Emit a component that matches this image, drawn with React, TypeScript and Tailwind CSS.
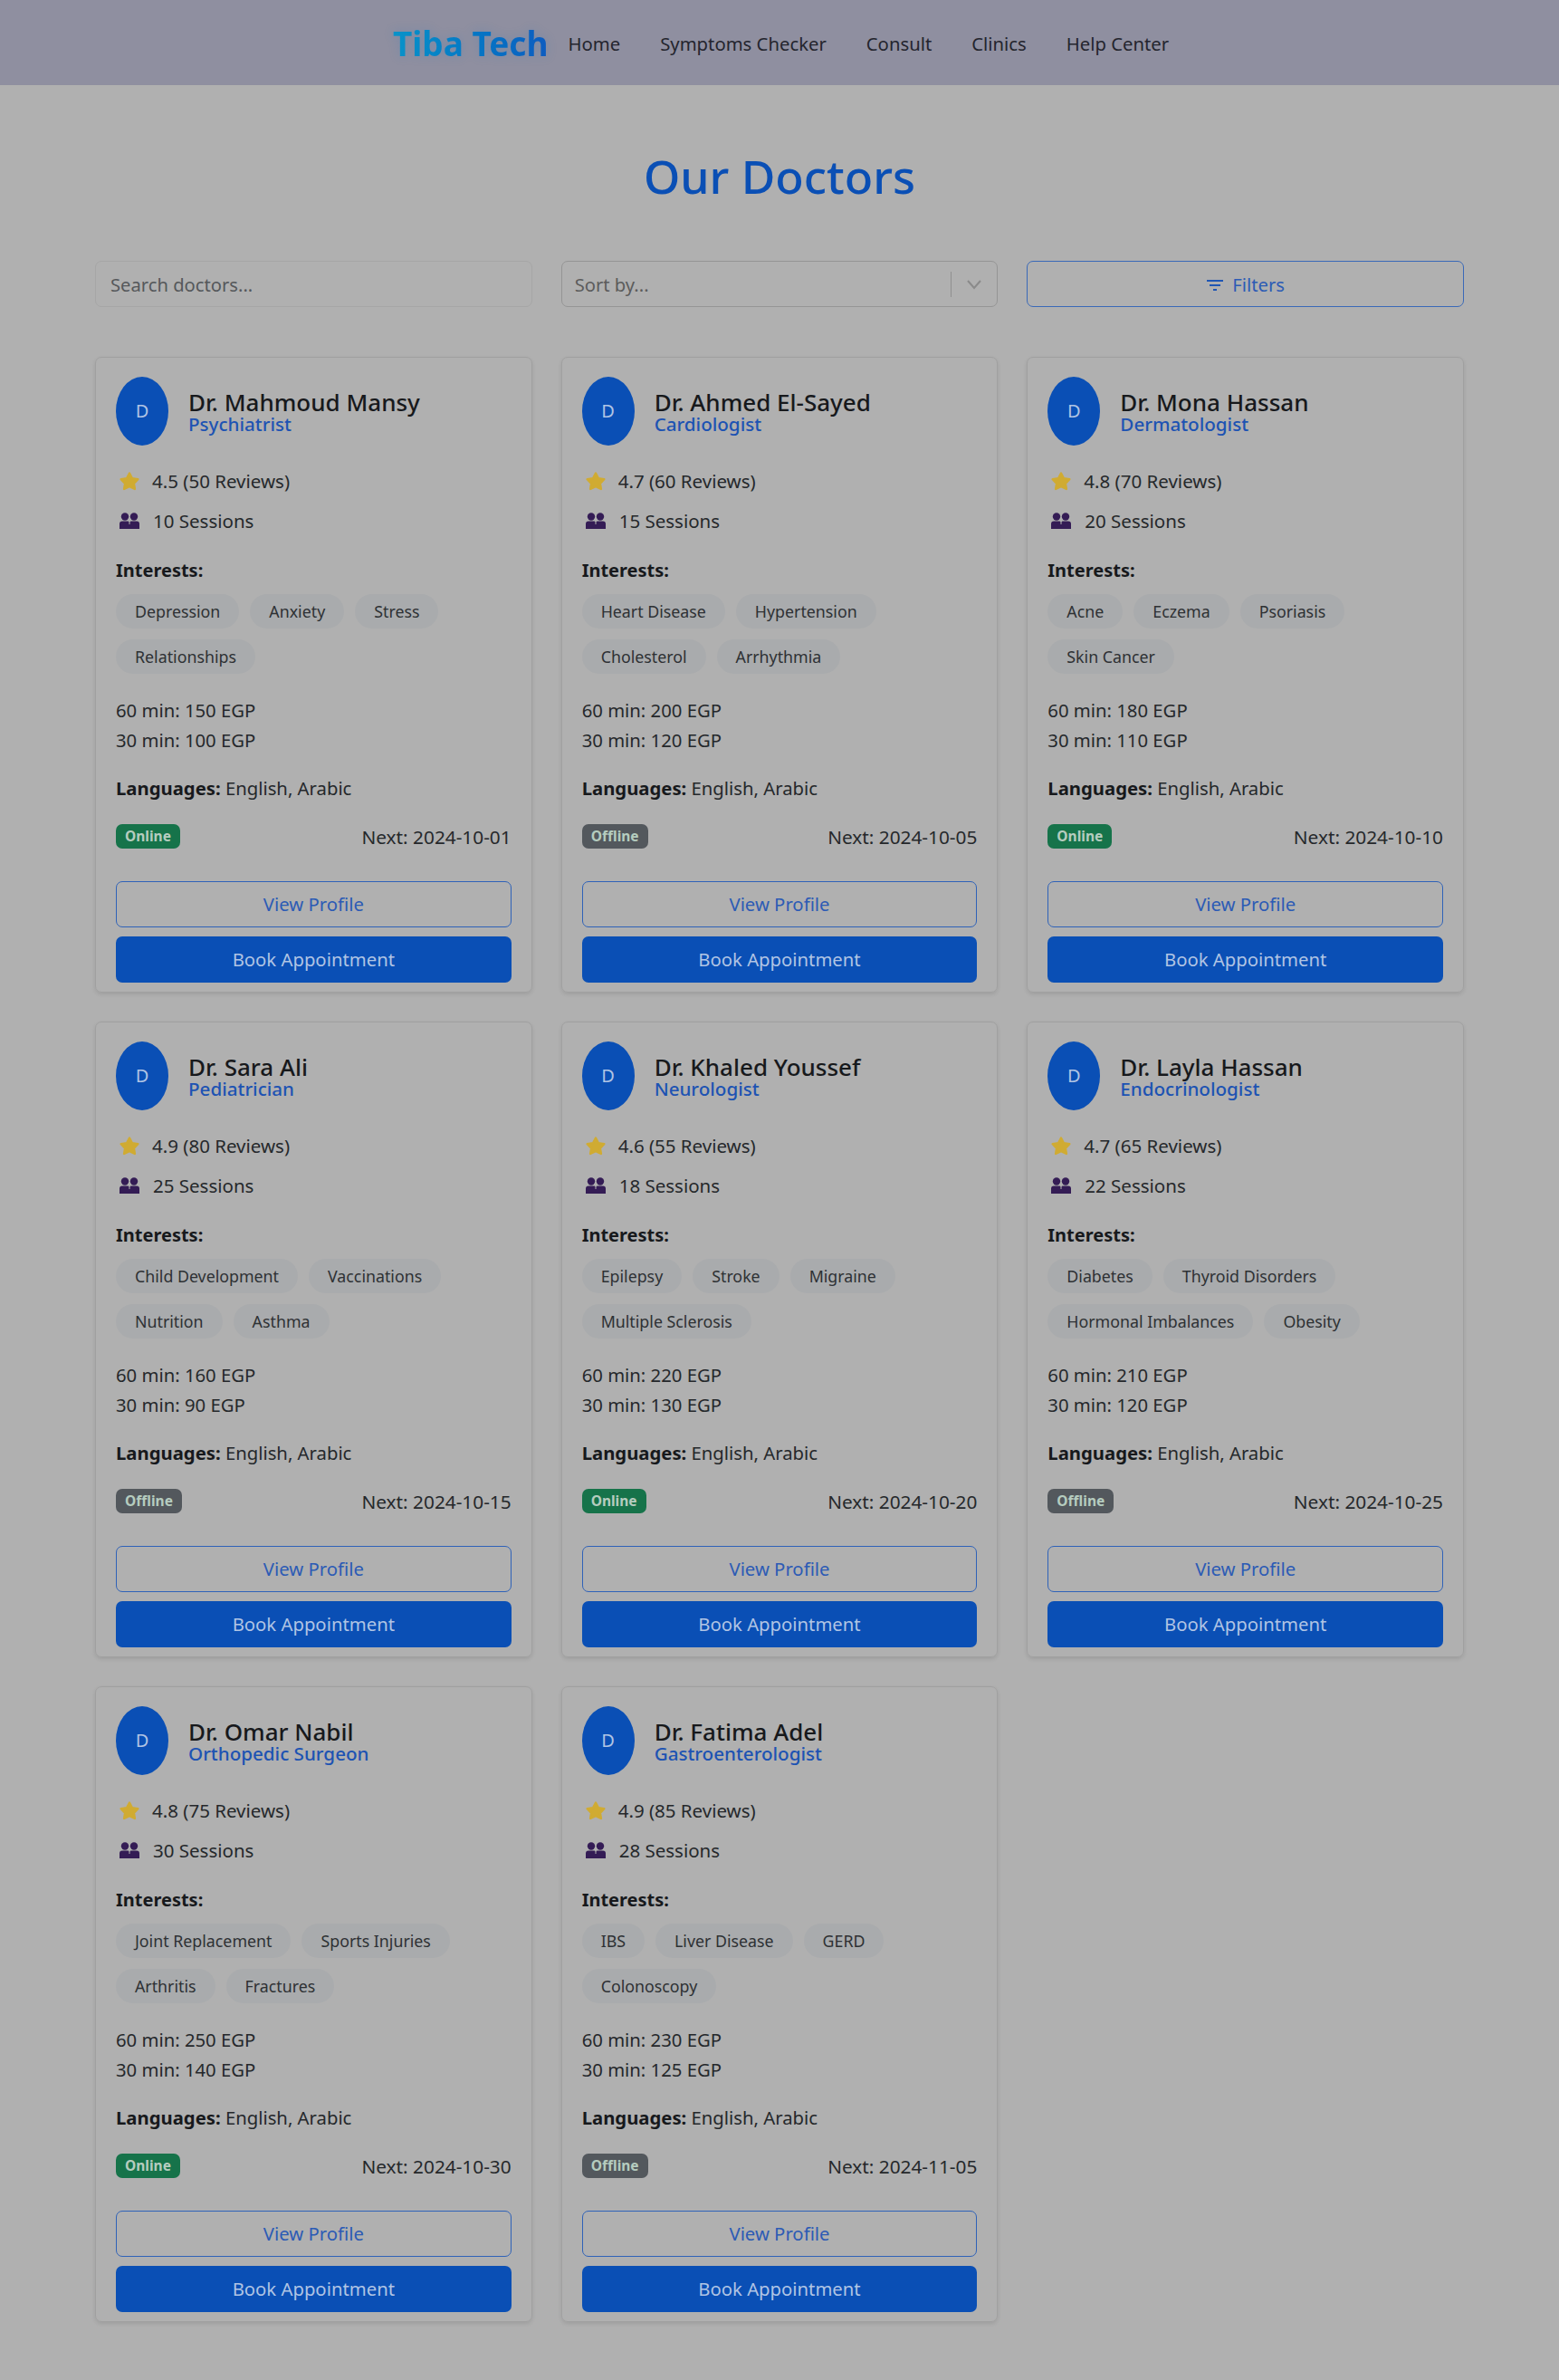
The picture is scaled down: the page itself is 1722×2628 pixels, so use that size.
const doctors = [
  { name: 'Dr. Mahmoud Mansy', spec: 'Psychiatrist', rating: '4.5 (50 Reviews)', sessions: 10, tags: ['Depression', 'Anxiety', 'Stress', 'Relationships'], p60: 150, p30: 100, online: true, next: '2024-10-01' },
  { name: 'Dr. Ahmed El-Sayed', spec: 'Cardiologist', rating: '4.7 (60 Reviews)', sessions: 15, tags: ['Heart Disease', 'Hypertension', 'Cholesterol', 'Arrhythmia'], p60: 200, p30: 120, online: false, next: '2024-10-05' },
  { name: 'Dr. Mona Hassan', spec: 'Dermatologist', rating: '4.8 (70 Reviews)', sessions: 20, tags: ['Acne', 'Eczema', 'Psoriasis', 'Skin Cancer'], p60: 180, p30: 110, online: true, next: '2024-10-10' },
  { name: 'Dr. Sara Ali', spec: 'Pediatrician', rating: '4.9 (80 Reviews)', sessions: 25, tags: ['Child Development', 'Vaccinations', 'Nutrition', 'Asthma'], p60: 160, p30: 90, online: false, next: '2024-10-15' },
  { name: 'Dr. Khaled Youssef', spec: 'Neurologist', rating: '4.6 (55 Reviews)', sessions: 18, tags: ['Epilepsy', 'Stroke', 'Migraine', 'Multiple Sclerosis'], p60: 220, p30: 130, online: true, next: '2024-10-20' },
  { name: 'Dr. Layla Hassan', spec: 'Endocrinologist', rating: '4.7 (65 Reviews)', sessions: 22, tags: ['Diabetes', 'Thyroid Disorders', 'Hormonal Imbalances', 'Obesity'], p60: 210, p30: 120, online: false, next: '2024-10-25' },
  { name: 'Dr. Omar Nabil', spec: 'Orthopedic Surgeon', rating: '4.8 (75 Reviews)', sessions: 30, tags: ['Joint Replacement', 'Sports Injuries', 'Arthritis', 'Fractures'], p60: 250, p30: 140, online: true, next: '2024-10-30' },
  { name: 'Dr. Fatima Adel', spec: 'Gastroenterologist', rating: '4.9 (85 Reviews)', sessions: 28, tags: ['IBS', 'Liver Disease', 'GERD', 'Colonoscopy'], p60: 230, p30: 125, online: false, next: '2024-11-05' },
]

const navLinks = ['Home', 'Symptoms Checker', 'Consult', 'Clinics', 'Help Center']

function StarIcon() {
  return (
    <svg width="22" height="21" viewBox="0 0 22 21" className="shrink-0">
      <path
        d="M11 1.5 L14 7.2 L20.3 8.2 L15.9 12.8 L16.9 19 L11 16.2 L5.1 19 L6.1 12.8 L1.7 8.2 L8 7.2 Z"
        fill="#d0ab32"
        stroke="#d0ab32"
        strokeWidth="2.4"
        strokeLinejoin="round"
      />
    </svg>
  )
}

function PeopleIcon() {
  return (
    <svg width="22" height="18" viewBox="0 0 22 18" className="shrink-0">
      <circle cx="6" cy="4.5" r="4.2" fill="#341c55" />
      <circle cx="16" cy="4.5" r="4.2" fill="#341c55" />
      <path d="M0 18 V12.5 Q0 9.5 3 9.5 H9.5 Q10.5 9.5 10.5 11 V13 H11.5 V11 Q11.5 9.5 12.5 9.5 H19 Q22 9.5 22 12.5 V18 Z" fill="#341c55" />
    </svg>
  )
}

function DoctorCard({ doc }: { doc: (typeof doctors)[number] }) {
  return (
    <div className="h-[702px] rounded-[7px] border border-[#a0a0a0] px-[22px] pt-[21px] shadow-[0_2px_4px_rgba(0,0,0,0.1)]">
      <div className="flex h-[76px] items-center gap-[22px]">
        <div className="flex h-[76px] w-[58px] items-center justify-center rounded-[50%] bg-[#0a4fb5] text-[20px] text-[#b0c4e4]">
          D
        </div>
        <div>
          <div className="text-[26px] leading-[28px] font-medium text-[#17191c]">{doc.name}</div>
          <div className="text-[20.6px] leading-[20px] font-medium text-[#1d53b3]">{doc.spec}</div>
        </div>
      </div>
      <div className="mt-[24px] flex h-[30px] items-center gap-[14px] px-[4px] text-[20.5px]">
        <StarIcon />
        <span>{doc.rating}</span>
      </div>
      <div className="mt-[14px] flex h-[30px] items-center gap-[15px] px-[4px] text-[20.5px]">
        <PeopleIcon />
        <span>{doc.sessions} Sessions</span>
      </div>
      <div className="mt-[26px] text-[20px] leading-[28px] font-bold text-[#17191c]">Interests:</div>
      <div className="mt-[12px] flex h-[88px] flex-wrap content-start gap-x-[12px] gap-y-[12px]">
        {doc.tags.map((t) => (
          <span key={t} className="h-[38px] rounded-full bg-[#a9abad] px-[21px] text-[17.8px] leading-[38px] text-[#2e3134]">
            {t}
          </span>
        ))}
      </div>
      <div className="mt-[24px] text-[20.3px] leading-[33px]">
        <div>60 min: {doc.p60} EGP</div>
        <div>30 min: {doc.p30} EGP</div>
      </div>
      <div className="mt-[20px] text-[20.3px] leading-[33px]">
        <b className="font-bold text-[#17191c]">Languages:</b> English, Arabic
      </div>
      <div className="mt-[21px] flex h-[33px] items-center justify-between">
        <span className={`-mt-[2px] h-[27px] rounded-[7px] px-[10px] text-[15.5px] leading-[27px] font-bold text-[#b5ccbf] ${doc.online ? 'bg-[#16734a]' : 'bg-[#53585d]'}`}>
          {doc.online ? 'Online' : 'Offline'}
        </span>
        <span className="text-[20.8px]">Next: {doc.next}</span>
      </div>
      <div className="mt-[32px] flex h-[51px] items-center justify-center rounded-[7px] border border-[#2f62b8] text-[20.3px] text-[#2c5bb5]">
        View Profile
      </div>
      <div className="mt-[10px] flex h-[51px] items-center justify-center rounded-[7px] bg-[#0a4fb5] text-[20.3px] text-[#b0c4e4]">
        Book Appointment
      </div>
    </div>
  )
}

export default function App() {
  return (
    <div className="min-h-[2628px] bg-[#b0b0b0] font-['Noto_Sans','Open_Sans',sans-serif] text-[#25282b]">
      <nav className="flex h-[94px] items-center justify-center bg-[#8f8fa0] pt-[2px] pl-[3px]">
        <span className="mr-[22px] bg-gradient-to-r from-[#0a93c9] to-[#0d5cc0] bg-clip-text text-[37px] font-bold text-transparent drop-shadow-[0_0_6px_rgba(13,110,200,0.2)]">
          Tiba Tech
        </span>
        <div className="flex gap-[44px] text-[20.3px] text-[#24252e]">
          {navLinks.map((l) => (
            <span key={l}>{l}</span>
          ))}
        </div>
      </nav>

      <main className="mx-auto w-[1512px]">
        <h1 className="mt-[68px] text-center text-[51.5px] leading-[64px] font-medium text-[#0a4fb5]">Our Doctors</h1>

        <div className="mt-[62px] grid grid-cols-3 gap-[32px]">
          <div className="flex h-[51px] items-center rounded-[7px] border border-[#a6a6a6] px-[16px] pt-[2px] text-[20.2px] text-[#55585b]">
            Search doctors...
          </div>
          <div className="flex h-[51px] items-center rounded-[7px] border border-[#959595] pl-[14px] text-[20.2px] text-[#5c5c5c]">
            <span className="flex-1 pt-[2px]">Sort by...</span>
            <span className="h-[28px] w-px bg-[#8f8f8f]" />
            <svg width="50" height="20" viewBox="0 0 50 20" fill="none" stroke="#8a8a8a" strokeWidth="2">
              <path d="M18 6 L25 14 L32 6" />
            </svg>
          </div>
          <div className="flex h-[51px] items-center justify-center gap-[9px] rounded-[7px] border border-[#3a69b8] pt-[2px] text-[20.2px] text-[#2c5bb5]">
            <svg width="20" height="16" viewBox="0 0 20 16" stroke="#1f56b4" strokeWidth="2">
              <path d="M1 3 H19 M4 8 H16 M8 13 H12" />
            </svg>
            Filters
          </div>
        </div>

        <div className="mt-[55px] grid grid-cols-3 gap-[32px]">
          {doctors.map((d) => (
            <DoctorCard key={d.name} doc={d} />
          ))}
        </div>
      </main>
    </div>
  )
}
